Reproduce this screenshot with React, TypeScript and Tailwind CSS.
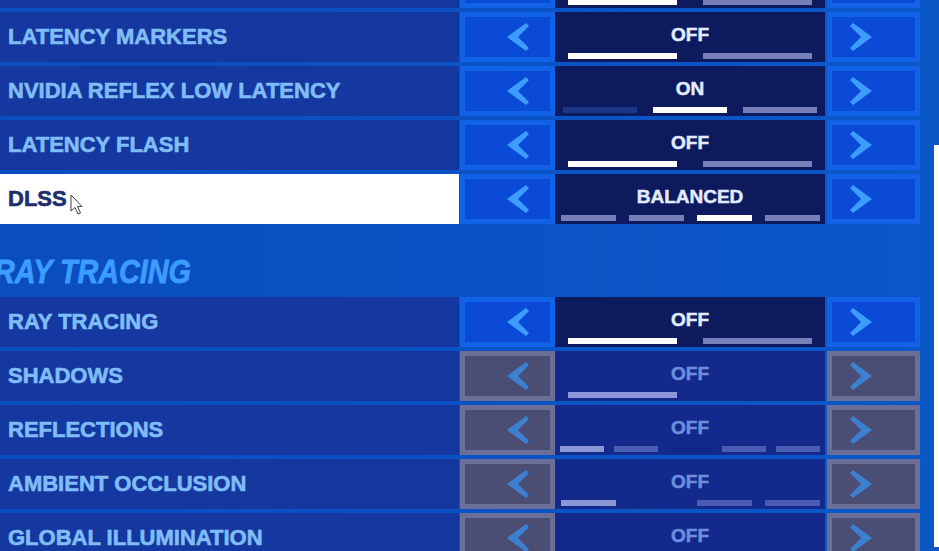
import React from "react";

type Layout = "two" | "three" | "four" | "five";

type Row = {
  label: string;
  value: string;
  layout: Layout;
  bars: string[];
  disabled?: boolean;
  selected?: boolean;
};

const LAYOUT: Record<Layout, { bar: string; gap: string }> = {
  two: { bar: "w-[109px]", gap: "gap-[26px]" },
  three: { bar: "w-[74px]", gap: "gap-[16px]" },
  four: { bar: "w-[55px]", gap: "gap-[13px]" },
  five: { bar: "w-[44px]", gap: "gap-[10px]" },
};

const ON = "bg-white";
const GREY = "bg-[#787eb8]";
const DIM = "bg-[#1a3486]";
const D_LIGHT = "bg-[#8c97d8]";
const D_MID = "bg-[#4b5cb3]";
const D_NONE = "bg-[#11288a]";

const topRows: Row[] = [
  { label: "LATENCY MARKERS", value: "OFF", layout: "two", bars: [ON, GREY] },
  { label: "NVIDIA REFLEX LOW LATENCY", value: "ON", layout: "three", bars: [DIM, ON, GREY] },
  { label: "LATENCY FLASH", value: "OFF", layout: "two", bars: [ON, GREY] },
  { label: "DLSS", value: "BALANCED", layout: "four", bars: [GREY, GREY, ON, GREY], selected: true },
];

const rtRows: Row[] = [
  { label: "RAY TRACING", value: "OFF", layout: "two", bars: [ON, GREY] },
  { label: "SHADOWS", value: "OFF", layout: "two", bars: [D_LIGHT, D_NONE], disabled: true },
  { label: "REFLECTIONS", value: "OFF", layout: "five", bars: [D_LIGHT, D_MID, D_NONE, D_MID, D_MID], disabled: true },
  { label: "AMBIENT OCCLUSION", value: "OFF", layout: "four", bars: [D_LIGHT, D_NONE, D_MID, D_MID], disabled: true },
  { label: "GLOBAL ILLUMINATION", value: "OFF", layout: "four", bars: [D_NONE, D_NONE, D_NONE, D_NONE], disabled: true },
];

const FONT = { fontFamily: '"Liberation Sans", Arial, sans-serif' };

function Arrow({ dir, disabled }: { dir: "left" | "right"; disabled?: boolean }) {
  const pts = dir === "left" ? "0,14 19,0 22,3 11,14 22,25 19,28" : "22,14 3,0 0,3 11,14 0,25 3,28";
  return (
    <svg width="22" height="28" viewBox="0 0 22 28">
      <polygon points={pts} fill={disabled ? "#3c80cf" : "#3d9dff"} strokeLinejoin="round" />
    </svg>
  );
}

function SideButton({ dir, disabled }: { dir: "left" | "right"; disabled?: boolean }) {
  const shell = disabled
    ? "border-[#6b6f97] bg-[#4a4d74]"
    : "border-[#1262e8] bg-[#0a4ad7]";
  const size = dir === "left" ? "w-[95px] pl-[42px]" : "w-[93px] pl-[18px]";
  return (
    <div className={`h-[50px] shrink-0 border-[5px] flex items-center ${shell} ${size}`}>
      <Arrow dir={dir} disabled={disabled} />
    </div>
  );
}

function Cursor() {
  return (
    <svg width="13" height="21" viewBox="0 0 13 21" className="ml-[3px] translate-y-[5px]">
      <path
        d="M1 1 L1 17 L5 13.5 L8 20 L10.5 19 L7.5 12.5 L12 12.5 Z"
        fill="#ffffff"
        stroke="#3a3f4f"
        strokeWidth="1"
        strokeLinejoin="round"
      />
    </svg>
  );
}

function SettingRow({ row }: { row: Row }) {
  const l = LAYOUT[row.layout];
  return (
    <div className="flex h-[50px] shrink-0">
      <div
        className={`w-[459px] h-full flex items-center pl-[8px] ${
          row.selected ? "bg-white" : "bg-[#14389f]"
        }`}
      >
        <span
          className={`text-[22px] leading-none font-bold [-webkit-text-stroke:0.6px_currentColor] ${
            row.selected ? "text-[#1d2e6c]" : "text-[#80bcf7]"
          }`}
          style={FONT}
        >
          {row.label}
        </span>
        {row.selected && <Cursor />}
      </div>
      <div className="ml-[1px] flex">
        <SideButton dir="left" disabled={row.disabled} />
        <div
          className={`w-[270px] h-[50px] flex flex-col items-center justify-between pt-[13px] pb-[3px] ${
            row.disabled ? "bg-[#132a8c]" : "bg-[#0d1a5e]"
          }`}
        >
          <span
            className={`text-[19px] leading-[19px] font-bold [-webkit-text-stroke:0.5px_currentColor] ${
              row.disabled ? "text-[#6e8ddd]" : "text-[#e2ebff]"
            }`}
            style={FONT}
          >
            {row.value}
          </span>
          <div className={`flex ${l.gap}`}>
            {row.bars.map((c, i) => (
              <div key={i} className={`h-[6px] ${l.bar} ${c}`} />
            ))}
          </div>
        </div>
        <div className="w-[2px]" />
        <SideButton dir="right" disabled={row.disabled} />
      </div>
    </div>
  );
}

export default function App() {
  return (
    <div className="w-[939px] h-[551px] overflow-hidden flex items-start bg-linear-to-r from-[#0a4dbf] to-[#0b58c8]">
      <div className="w-[921px] shrink-0 flex flex-col gap-[4px] mt-[-42px]">
        <SettingRow row={{ label: "", value: "", layout: "two", bars: [ON, GREY] }} />
        {topRows.map((r) => (
          <SettingRow key={r.label} row={r} />
        ))}
        <div className="h-[65px] shrink-0 pt-[27px]">
          <div
            className="ml-[-6px] origin-left scale-x-[0.87] text-[33px] leading-[33px] font-bold italic text-[#3d9cff] whitespace-nowrap [-webkit-text-stroke:0.8px_currentColor]"
            style={FONT}
          >
            RAY TRACING
          </div>
        </div>
        {rtRows.map((r) => (
          <SettingRow key={r.label} row={r} />
        ))}
      </div>
      <div className="flex-1 self-stretch bg-[#0a58c6] pt-[145px]">
        <div className="ml-[13px] w-[5px] h-[402px] bg-white" />
      </div>
    </div>
  );
}
